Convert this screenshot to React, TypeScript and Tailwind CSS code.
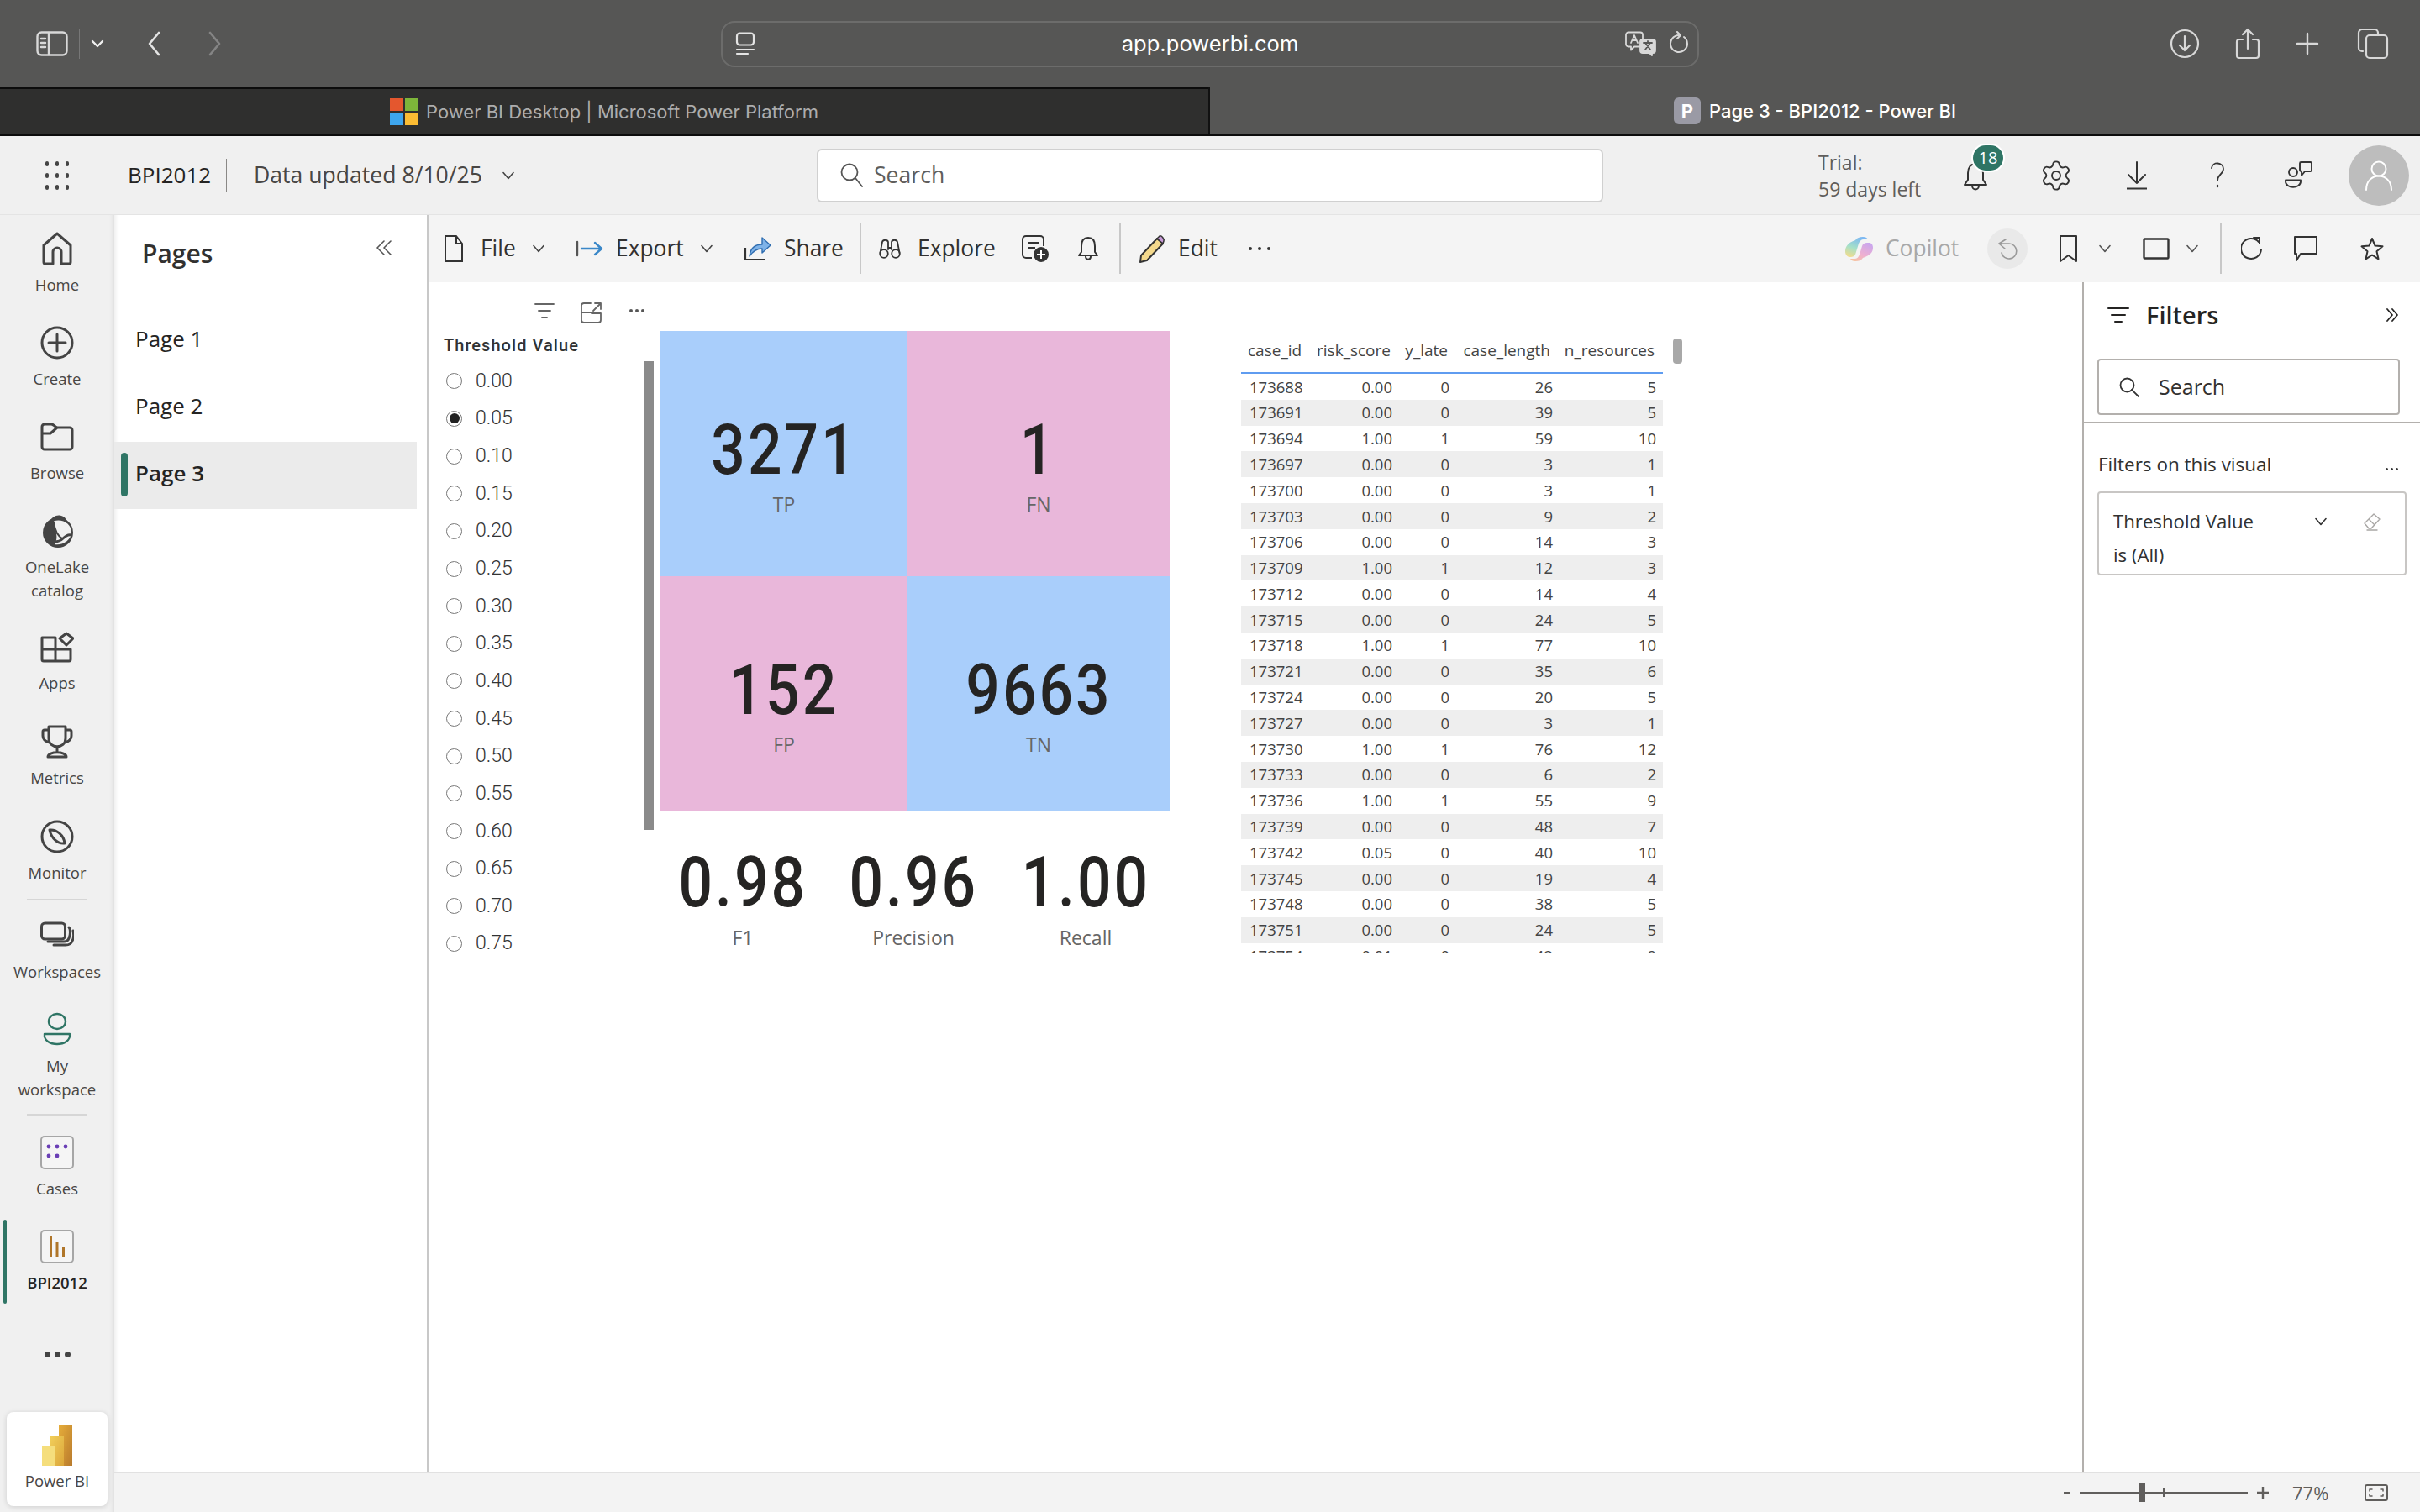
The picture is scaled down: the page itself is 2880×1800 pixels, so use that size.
import React from "react";
import { Settings } from "lucide-react";

const Ic = ({ w, h, c = "currentColor", sw = 2, children, className = "" }: { w: number; h: number; c?: string; sw?: number; children: React.ReactNode; className?: string }) => (
  <svg width={w} height={h} viewBox={`0 0 ${w} ${h}`} fill="none" stroke={c} strokeWidth={sw} strokeLinecap="round" strokeLinejoin="round" className={`shrink-0 ${className}`}>
    {children}
  </svg>
);

const Chevron = ({ c = "#444", className = "" }: { c?: string; className?: string }) => (
  <Ic w={14} h={10} c={c} sw={1.6} className={className}><path d="M1 1.5l6 7 6-7" /></Ic>
);

function SafariBar() {
  return (
    <div className="h-[104px] bg-[#565655] flex items-center text-[#e4e4e4] font-['Inter',sans-serif]">
      <div className="ml-[43px]">
        <Ic w={38} h={30} c="#d8d8d8" sw={2.4}>
          <rect x="1.5" y="1.5" width="35" height="27" rx="5" />
          <path d="M15 2v26M6 9h5M6 14h5M6 19h5" />
        </Ic>
      </div>
      <div className="ml-[13px] w-[1px] h-[36px] bg-[#777]" />
      <Ic w={16} h={10} c="#f0f0f0" sw={2.4} className="ml-[13px]"><path d="M2 2l6 6 6-6" /></Ic>
      <Ic w={16} h={30} c="#e4e4e4" sw={2.6} className="ml-[51px]"><path d="M14 2L3 15l11 13" /></Ic>
      <Ic w={16} h={30} c="#858585" sw={2.6} className="ml-[57px]"><path d="M2 2l11 13L2 28" /></Ic>
      <div className="ml-[594px] w-[1164px] h-[55px] rounded-[16px] border-2 border-[#6c6c6b] grid grid-cols-[1fr_auto_1fr] items-center">
        <div className="pl-[15px] flex">
          <Ic w={24} h={28} c="#e4e4e4" sw={2.2}>
            <rect x="2" y="1.5" width="20" height="14" rx="3.5" />
            <path d="M2 21h20M2 26h13" />
          </Ic>
        </div>
        <div className="text-[25.6px] leading-[32px] text-white">app.powerbi.com</div>
        <div className="flex justify-end items-center pr-[10px]">
          <Ic w={38} h={30} c="#d8d8d8" sw={1.8}>
            <path d="M4 1.5h14a3 3 0 013 3v11a3 3 0 01-3 3h-7l-4 4v-4H4a3 3 0 01-3-3v-11a3 3 0 013-3z" />
            <rect x="18" y="10" width="18" height="16" rx="3" fill="#d8d8d8" />
            <path d="M32 26v3l-3-3z" fill="#d8d8d8" />
            <path d="M7 14l4-9 4 9M8.5 11h5" />
            <path d="M22 14h10M27 12v2M24 22l6-8M30 22l-6-8" stroke="#565655" />
          </Ic>
          <Ic w={24} h={30} c="#d8d8d8" sw={2} className="ml-[14px]">
            <path d="M18 7a10 10 0 11-6-2" />
            <path d="M10 1l4 4-4 4" />
          </Ic>
        </div>
      </div>
      <Ic w={36} h={36} c="#d8d8d8" sw={2.2} className="ml-[560px]">
        <circle cx="18" cy="18" r="16" />
        <path d="M18 9v17M12 20l6 6 6-6" />
      </Ic>
      <Ic w={32} h={38} c="#d8d8d8" sw={2.2} className="ml-[41px]">
        <path d="M10 14H6a3 3 0 00-3 3v16a3 3 0 003 3h20a3 3 0 003-3V17a3 3 0 00-3-3h-4" />
        <path d="M16 25V2M10 8l6-6 6 6" />
      </Ic>
      <Ic w={28} h={28} c="#d8d8d8" sw={2.4} className="ml-[41px]"><path d="M14 2v24M2 14h24" /></Ic>
      <Ic w={38} h={38} c="#d8d8d8" sw={2.2} className="ml-[45px]">
        <rect x="11" y="9" width="25" height="27" rx="4" />
        <path d="M7 28H6a4 4 0 01-4-4V6a4 4 0 014-4h15a4 4 0 014 4v2" />
      </Ic>
    </div>
  );
}

function TabBar() {
  return (
    <div className="h-[58px] flex font-['Inter',sans-serif] text-[22px]">
      <div className="w-[1438px] bg-[#2f2f2e] border-y-2 border-[#0c0c0c] flex items-center justify-center text-[#adadad]">
        <div className="grid grid-cols-2 gap-[2px] w-[33px] h-[32px] mr-[10px]">
          <div className="bg-[#e4572e]" />
          <div className="bg-[#7db53a]" />
          <div className="bg-[#3ea6ee]" />
          <div className="bg-[#fbbc33]" />
        </div>
        <span>Power BI Desktop | Microsoft Power Platform</span>
      </div>
      <div className="w-[2px] bg-[#111] border-b-2 border-[#0c0c0c]" />
      <div className="flex-1 bg-[#565655] border-b-2 border-[#0c0c0c] flex items-center justify-center text-white">
        <div className="w-[32px] h-[32px] rounded-[6px] bg-[#9a9aa5] text-white font-bold text-[22px] flex items-center justify-center mr-[10px]">P</div>
        <span className="font-medium">Page 3 - BPI2012 - Power BI</span>
      </div>
    </div>
  );
}

function HeaderBar() {
  return (
    <div className="h-[94px] bg-[#f0f0f0] flex items-center shrink-0 border-b border-[#e4e4e4]">
      <div className="w-[972px] flex items-center shrink-0">
        <div className="ml-[54px] grid grid-cols-3 gap-x-[8px] gap-y-[8px]">
          {Array.from({ length: 9 }).map((_, i) => (
            <div key={i} className="w-[4px] h-[6px] rounded-full bg-[#444]" />
          ))}
        </div>
        <span className="ml-[70px] w-[100px] text-[26px] text-[#252423]">BPI2012</span>
        <div className="ml-[17px] w-[1px] h-[40px] bg-[#8a8886]" />
        <span className="ml-[32px] w-[274px] text-[26.6px] whitespace-nowrap text-[#484644]">Data updated 8/10/25</span>
        <Chevron c="#444" className="ml-[22px]" />
      </div>
      <div className="w-[936px] h-[64px] shrink-0 bg-white rounded-[6px] border-2 border-[#d0d0d0] flex items-center text-[26.6px] text-[#605e5c]">
        <Ic w={28} h={30} c="#555" sw={1.8} className="ml-[26px]">
          <circle cx="11" cy="11" r="9.5" />
          <path d="M18 18l8 10" />
        </Ic>
        <span className="ml-[12px]">Search</span>
      </div>
      <div className="ml-[256px] w-[139px] shrink-0 text-[23px] leading-[32px] text-[#605e5c]">
        <div>Trial:</div>
        <div>59 days left</div>
      </div>
      <div className="w-[96px] shrink-0 flex justify-center relative">
        <Ic w={30} h={40} c="#333" sw={2}>
          <path d="M15 6c-6 0-9 5-9 11v8l-4 6h26l-4-6v-8c0-6-3-11-9-11zM11 32c0 6 8 6 8 0" />
        </Ic>
        <div className="absolute left-[43px] -top-[18px] w-[40px] h-[34px] rounded-full bg-[#2f7565] border-2 border-white text-white text-[20px] flex items-center justify-center">18</div>
      </div>
      <div className="w-[96px] shrink-0 flex justify-center">
        <Settings size={40} color="#333" strokeWidth={1.15} />
      </div>
      <div className="w-[96px] shrink-0 flex justify-center">
        <Ic w={26} h={34} c="#333" sw={2}>
          <path d="M13 1v25M3 16l10 10 10-10" />
          <path d="M1 32.5h24" strokeLinecap="butt" />
        </Ic>
      </div>
      <div className="w-[96px] shrink-0 flex justify-center">
        <Ic w={20} h={32} c="#333" sw={1.8}>
          <path d="M3 7c1-8 14-7 14 1 0 6-7 7-7 14" />
          <path d="M10 28v1" strokeWidth="2.4" />
        </Ic>
      </div>
      <div className="w-[96px] shrink-0 flex justify-center">
        <Ic w={33} h={33} c="#333" sw={1.9}>
          <circle cx="10" cy="13" r="5" />
          <path d="M1 22.5h18v1.500c0 9-18 9-18 0z" />
          <path d="M19.500 1h11a1.500 1.500 0 011.500 1.500v8a1.500 1.500 0 01-1.500 1.500H24l-4 5v-5a2 2 0 01-2-2V2.500A1.500 1.500 0 0119.500 1z" />
        </Ic>
      </div>
      <div className="w-[96px] shrink-0 flex justify-center">
        <div className="w-[72px] h-[72px] rounded-full bg-[#bdbdbd] flex items-center justify-center">
          <Ic w={34} h={36} c="#fff" sw={2}>
            <circle cx="17" cy="10" r="8.5" />
            <path d="M2 35c0-22 30-22 30 0" />
          </Ic>
        </div>
      </div>
    </div>
  );
}

function NavItem({ label, icon, h, active, bold }: { label: React.ReactNode; icon: React.ReactNode; h: string; active?: boolean; bold?: boolean }) {
  return (
    <div className={`relative flex flex-col items-center pt-[20px] text-[18.5px] leading-[28px] text-center ${h} ${bold ? "text-[#252423] font-semibold" : "text-[#484644]"}`}>
      {active && <div className="absolute left-[4px] top-[8px] w-[4px] h-[100px] rounded-full bg-[#2f7565]" />}
      <div className="h-[40px] flex items-center justify-center">{icon}</div>
      <div className="mt-[9px]">{label}</div>
    </div>
  );
}

function LeftNav() {
  const c = "#444";
  return (
    <div className="w-[136px] bg-[#f0f0f0] shrink-0 flex flex-col shadow-[inset_-6px_0_6px_-6px_rgba(0,0,0,.12)]">
      <NavItem label="Home" h="h-[112px]" icon={
        <Ic w={36} h={40} c={c} sw={3}><path d="M18 2L2 16v20a2 2 0 002 2h9V24a5 5 0 0110 0v14h9a2 2 0 002-2V16z" /></Ic>
      } />
      <NavItem label="Create" h="h-[112px]" icon={
        <Ic w={40} h={40} c={c} sw={3}><circle cx="20" cy="20" r="18" /><path d="M20 10v20M10 20h20" /></Ic>
      } />
      <NavItem label="Browse" h="h-[112px]" icon={
        <Ic w={40} h={36} c={c} sw={3}><path d="M2 6a3 3 0 013-3h8c3 0 4 3 7 4h15a3 3 0 013 3v20a3 3 0 01-3 3H5a3 3 0 01-3-3zM2 14h10l8-7" /></Ic>
      } />
      <NavItem label={<>OneLake<br />catalog</>} h="h-[138px]" icon={
        <svg width="39" height="40" viewBox="0 0 39 40" className="shrink-0">
          <circle cx="20" cy="22" r="18" fill="#444" />
          <path d="M11 9C13 0 27-2 31 9z" fill="#444" />
          <path d="M15 8.500C25 5 36.500 12 36 22c-.5 9-10 15.500-20 14C21 29 17 19 15 8.500z" fill="#f0f0f0" />
          <path d="M8 32c8 2 14 1 18-3 4-4 7-5 10-4" fill="none" stroke="#444" strokeWidth="3" />
          <path d="M15 9c1 10 4 17 11 21" fill="none" stroke="#444" strokeWidth="2.200" />
        </svg>
      } />
      <NavItem label="Apps" h="h-[113px]" icon={
        <Ic w={40} h={38} c={c} sw={3}><path d="M2 8h16v28H4a2 2 0 01-2-2zM2 22h34v12a2 2 0 01-2 2H18M18 22V8M23 9l8-6 8 6-8 8z" /></Ic>
      } />
      <NavItem label="Metrics" h="h-[113px]" icon={
        <Ic w={38} h={40} c={c} sw={3}><path d="M9 2h20v14c0 13-20 13-20 0zM9 6H4a2 2 0 00-2 2v5c0 5 4 7 8 8M29 6h5a2 2 0 012 2v5c0 5-4 7-8 8M19 27v5M8 38c0-7 22-7 22 0z" /></Ic>
      } />
      <NavItem label="Monitor" h="h-[114px]" icon={
        <Ic w={40} h={40} c={c} sw={3}><circle cx="20" cy="20" r="18" /><path d="M11 12c8-1 17 6 18 16-8 1-16-6-18-16z" /></Ic>
      } />
      <div className="mx-[32px] h-[2px] bg-[#d6d6d6]" />
      <div className="h-[2px]" />
      <NavItem label="Workspaces" h="h-[112px]" icon={
        <Ic w={40} h={34} c={c} sw={3}><rect x="1.5" y="2" width="28" height="19" rx="4" /><path d="M34 7c2 2 2 9 0 13-1 3-3 4-6 4H9M39 11c1 5 1 9-1 12-1 4-4 5-8 5H16" /></Ic>
      } />
      <NavItem label={<>My<br />workspace</>} h="h-[140px]" icon={
        <Ic w={34} h={42} c="#2f7565" sw={2.4}><ellipse cx="17" cy="11" rx="10" ry="9" /><path d="M2 26h30c2 16-32 16-30 0z" /></Ic>
      } />
      <div className="mx-[32px] h-[2px] bg-[#d6d6d6]" />
      <div className="h-[4px]" />
      <NavItem label="Cases" h="h-[112px]" icon={
        <svg width="40" height="40" viewBox="0 0 40 40" className="shrink-0">
          <rect x="1" y="1" width="38" height="38" rx="4" fill="#f5f5f5" stroke="#a6a6a6" strokeWidth="2" />
          {[[10, 13], [20, 13], [30, 13], [10, 24], [20, 24]].map(([x, y]) => <circle key={`${x}-${y}`} cx={x} cy={y} r="2.4" fill="#6a3fb5" />)}
        </svg>
      } />
      <NavItem label="BPI2012" h="h-[112px]" bold active icon={
        <svg width="40" height="40" viewBox="0 0 40 40" className="shrink-0">
          <rect x="1" y="1" width="38" height="38" rx="4" fill="#f5f5f5" stroke="#a6a6a6" strokeWidth="2" />
          <rect x="11" y="8" width="3" height="24" fill="#b0762a" />
          <rect x="18.5" y="14" width="3" height="18" fill="#b0762a" />
          <rect x="26" y="21" width="3" height="11" fill="#b0762a" />
        </svg>
      } />
      <div className="h-[56px] mt-[28px] flex justify-center gap-[5px] items-center">
        <div className="w-[7px] h-[7px] rounded-full bg-[#444]" />
        <div className="w-[7px] h-[7px] rounded-full bg-[#444]" />
        <div className="w-[7px] h-[7px] rounded-full bg-[#444]" />
      </div>
      <div className="mt-[41px] mx-[8px] h-[112px] w-[120px] bg-white rounded-[8px] shadow-[0_1px_6px_rgba(0,0,0,.14)] flex flex-col items-center pt-[16px]">
        <svg width="36" height="48" viewBox="0 0 36 48">
          <defs>
            <linearGradient id="pb1" x1="0" x2="1" y1="0" y2="1"><stop offset="0" stopColor="#e6ad3a" /><stop offset="1" stopColor="#b87a2d" /></linearGradient>
            <linearGradient id="pb2" x1="0" x2="1" y1="0" y2="1"><stop offset="0" stopColor="#f2cf5a" /><stop offset="1" stopColor="#dba63a" /></linearGradient>
          </defs>
          <rect x="20" y="0" width="16" height="48" fill="url(#pb1)" />
          <rect x="10" y="12" width="16" height="36" fill="url(#pb2)" />
          <rect x="0" y="24" width="16" height="24" fill="#f5de7c" />
        </svg>
        <div className="mt-[4px] text-[18.5px] leading-[28px] text-[#484644]">Power BI</div>
      </div>
    </div>
  );
}

function PagesPanel() {
  return (
    <div className="w-[374px] shrink-0 bg-white border-r-2 border-[#c8c8c8] flex flex-col pr-[12px] shadow-[inset_6px_0_6px_-6px_rgba(0,0,0,.12)]">
      <div className="h-[110px] flex items-center justify-between pl-[33px] pr-[30px] pb-[20px]">
        <span className="text-[30px] font-semibold text-[#323130]">Pages</span>
        <Ic w={18} h={18} c="#555" sw={1.6} className="mb-[12px]"><path d="M9 1L1 9l8 8M17 1L9 9l8 8" /></Ic>
      </div>
      <div className="h-[80px] flex items-center pl-[25px] pb-[5px] text-[26px] text-[#252423]">Page 1</div>
      <div className="h-[80px] flex items-center pl-[25px] pb-[5px] text-[26px] text-[#252423]">Page 2</div>
      <div className="h-[80px] flex items-center bg-[#ebebeb] text-[26px] font-semibold text-[#252423]">
        <div className="ml-[8px] mb-[2px] w-[8px] h-[52px] rounded-full bg-[#2f7565]" />
        <span className="ml-[9px] mb-[5px]">Page 3</span>
      </div>
    </div>
  );
}

function Toolbar() {
  return (
    <div className="h-[80px] shrink-0 bg-[#f4f4f4] flex items-center text-[26.4px] text-[#323130]">
      <Ic w={22} h={32} c="#333" sw={2} className="ml-[19px]"><path d="M1 1h13l7 9v21H1zM14 1v9h7" /><path d="M1 31h20" strokeWidth="3" /></Ic>
      <span className="ml-[21px] w-[41px]">File</span>
      <Chevron className="ml-[21px]" />
      <Ic w={32} h={20} c="#3a87c8" sw={2.4} className="ml-[38px]"><path d="M1 2v16" stroke="#555" /><path d="M6 10h24M22 3l8 7-8 7" /></Ic>
      <span className="ml-[15px] w-[80px]">Export</span>
      <Chevron className="ml-[21px]" />
      <svg width="32" height="30" viewBox="0 0 32 30" className="ml-[38px] shrink-0">
        <path d="M1 14v14h24" fill="none" stroke="#333" strokeWidth="2.2" />
        <path d="M6 24C7 14 13 10 21 10V2l10 9-10 9v-5c-7 0-11 3-15 9z" fill="#7fb3e8" stroke="#2f6db0" strokeWidth="1.4" strokeLinejoin="round" />
      </svg>
      <span className="ml-[15px] w-[70px]">Share</span>
      <div className="ml-[20px] w-[2px] h-[60px] bg-[#c8c8c8]" />
      <Ic w={26} h={24} c="#333" sw={1.8} className="ml-[21px]">
        <circle cx="6" cy="18" r="4.8" /><circle cx="20" cy="18" r="4.8" />
        <path d="M1.500 17L4 4c1-3 6-3 7 0v9M24.500 17L22 4c-1-3-6-3-7 0v9M11 11h4" />
      </Ic>
      <span className="ml-[20px] w-[90px]">Explore</span>
      <svg width="32" height="32" viewBox="0 0 32 32" className="ml-[34px] shrink-0">
        <path d="M12 27H5a4 4 0 01-4-4V5a4 4 0 014-4h17a4 4 0 014 4v8M7 9h14M7 15h9" fill="none" stroke="#333" strokeWidth="2" />
        <circle cx="23" cy="23" r="9" fill="#333" />
        <path d="M23 18v10M18 23h10" stroke="#fff" strokeWidth="2" />
      </svg>
      <Ic w={24} h={30} c="#333" sw={2} className="ml-[35px]"><path d="M12 2c-6 0-8 5-8 10v7l-3 4h22l-3-4v-7c0-5-2-10-8-10zM9 24c0 5 6 5 6 0" /></Ic>
      <div className="ml-[25px] w-[2px] h-[60px] bg-[#c8c8c8]" />
      <svg width="32" height="34" viewBox="0 0 32 34" className="ml-[21px] shrink-0">
        <path d="M22 5l7 6L10 31l-8 2 1-8z" fill="#f4d98c" stroke="#333" strokeWidth="2" strokeLinejoin="round" />
        <path d="M22 5l3-3c2-1 6 3 5 6l-1 3z" fill="#c79ad8" stroke="#333" strokeWidth="1.5" />
      </svg>
      <span className="ml-[15px] w-[63px]">Edit</span>
      <div className="ml-[21px] flex gap-[7px]">
        <div className="w-[4px] h-[4px] rounded-full bg-[#333]" />
        <div className="w-[4px] h-[4px] rounded-full bg-[#333]" />
        <div className="w-[4px] h-[4px] rounded-full bg-[#333]" />
      </div>
      <div className="flex-1" />
      <svg width="33" height="29" viewBox="0 0 33 29" className="shrink-0">
        <defs>
          <linearGradient id="cp1" x1="0.6" x2="0.2" y1="0" y2="1"><stop offset="0" stopColor="#7cb8f2" /><stop offset=".55" stopColor="#a5e0c8" /><stop offset="1" stopColor="#f2dc8c" /></linearGradient>
          <linearGradient id="cp2" x1="0.8" x2="0.2" y1="0" y2="1"><stop offset="0" stopColor="#c9a6ee" /><stop offset=".6" stopColor="#efb0d0" /><stop offset="1" stopColor="#f6c2a0" /></linearGradient>
        </defs>
        <path d="M12 4c2-3 5-4 9-4 3 0 5 1 6 3h-5c-3 0-5 2-6 5l-4 13c-1 2-3 3-6 3-4 0-6-3-6-7 0-5 3-10 12-13z" fill="url(#cp1)" />
        <path d="M21 25c-2 3-5 4-9 4-3 0-5-1-6-3h5c3 0 5-2 6-5l3-10c1-3 3-4 6-4h2c3 0 5 2 5 6 0 5-3 9-12 12z" fill="url(#cp2)" />
      </svg>
      <span className="ml-[15px] w-[90px] text-[#a8a8a8]">Copilot</span>
      <div className="ml-[31px] w-[48px] h-[48px] rounded-full bg-[#e9e9e9] flex items-center justify-center">
        <Ic w={24} h={26} c="#999" sw={1.6}><path d="M2 7l8-5M2 7l7 6M2 7h12a9 9 0 11-9 11" /></Ic>
      </div>
      <Ic w={21} h={32} c="#333" sw={2} className="ml-[38px]"><path d="M1 1h19v30l-9.5-7L1 31z" /></Ic>
      <Chevron c="#555" className="ml-[26px]" />
      <Ic w={32} h={26} c="#333" sw={2.4} className="ml-[38px]"><rect x="1.5" y="1.5" width="29" height="23" rx="1" /></Ic>
      <Chevron c="#555" className="ml-[20px]" />
      <div className="ml-[26px] w-[2px] h-[60px] bg-[#c8c8c8]" />
      <Ic w={25} h={30} c="#333" sw={2} className="ml-[23px]"><path d="M21 7a12 12 0 10 3 9" /><path d="M15 2h7v7" /></Ic>
      <Ic w={28} h={30} c="#333" sw={2} className="ml-[38px]"><path d="M1 1h26v20H8l-5 8v-8H1z" /></Ic>
      <Ic w={28} h={28} c="#333" sw={2} className="ml-[51px]"><path d="M14 2l3.5 8.5 9 .8-7 6 2 9L14 21.5 6.5 26.3l2-9-7-6 9-.8z" /></Ic>
      <div className="w-[43px]" />
    </div>
  );
}

const thresholds = ["0.00","0.05","0.10","0.15","0.20","0.25","0.30","0.35","0.40","0.45","0.50","0.55","0.60","0.65","0.70","0.75"];

function Slicer() {
  return (
    <div className="w-[276px] shrink-0 h-[799px] flex overflow-hidden">
      <div className="w-[256px] shrink-0">
        <div className="h-[48px] pt-[20px] flex items-center pl-[126px]">
          <Ic w={24} h={20} c="#666" sw={1.8}><path d="M1 2h22M5 10h14M9 18h6" /></Ic>
          <Ic w={26} h={26} c="#666" sw={1.8} className="ml-[31px] mt-[4px]">
            <path d="M12 2H4a3 3 0 00-3 3v17a3 3 0 003 3h17a3 3 0 003-3v-8H13V13H1M15 11l9-9M17 2h7v7" />
          </Ic>
          <div className="ml-[32px] flex gap-[3px]">
            <div className="w-[4px] h-[4px] rounded-full bg-[#555]" />
            <div className="w-[4px] h-[4px] rounded-full bg-[#555]" />
            <div className="w-[4px] h-[4px] rounded-full bg-[#555]" />
          </div>
        </div>
        <div className="pl-[18px] mt-[14px] h-[26px] leading-[26px] text-[20px] font-medium tracking-[1.05px] text-[#333] font-['Roboto',sans-serif]">Threshold Value</div>
        <div className="mt-[7.5px]">
          {thresholds.map((t) => (
            <div key={t} className="h-[44.65px] flex items-center pl-[21px]">
              <div className="w-[19px] h-[19px] rounded-full border border-[#777] bg-white flex items-center justify-center shrink-0">
                {t === "0.05" && <div className="w-[12px] h-[12px] rounded-full bg-[#222]" />}
              </div>
              <span className="ml-[16px] text-[23px] text-[#333] font-['Roboto',sans-serif] font-light leading-[28px]">{t}</span>
            </div>
          ))}
        </div>
      </div>
      <div className="w-[12px] h-[558px] mt-[94px] bg-[#8a8a8a] shrink-0" />
    </div>
  );
}

const Big = ({ children }: { children: React.ReactNode }) => (
  <div className="h-[84px] leading-[84px] text-[84px] font-medium text-[#252423] font-['Roboto',sans-serif] tracking-[3.5px] scale-x-[.85]">{children}</div>
);
const Sub = ({ children, className = "mt-[9px]" }: { children: React.ReactNode; className?: string }) => (
  <div className={`h-[30px] leading-[30px] text-[23px] text-[#666] ${className}`}>{children}</div>
);

function Matrix() {
  return (
    <div className="w-[606px] shrink-0 mt-[58px]">
      <div className="grid grid-cols-[294px_312px] grid-rows-[292px_280px]">
        <div className="bg-[#a9cefb] flex flex-col items-center pt-[100px]"><Big>3271</Big><Sub className="mt-[7px]">TP</Sub></div>
        <div className="bg-[#e9b7da] flex flex-col items-center pt-[100px]"><Big>1</Big><Sub className="mt-[7px]">FN</Sub></div>
        <div className="bg-[#e9b7da] flex flex-col items-center pt-[94px]"><Big>152</Big><Sub className="mt-[7px]">FP</Sub></div>
        <div className="bg-[#a9cefb] flex flex-col items-center pt-[94px]"><Big>9663</Big><Sub className="mt-[7px]">TN</Sub></div>
      </div>
      <div className="mt-[43px] grid grid-cols-[196px_210px_200px]">
        <div className="flex flex-col items-center"><Big>0.98</Big><Sub className="mt-[8px]">F1</Sub></div>
        <div className="flex flex-col items-center"><Big>0.96</Big><Sub className="mt-[8px]">Precision</Sub></div>
        <div className="flex flex-col items-center"><Big>1.00</Big><Sub className="mt-[8px]">Recall</Sub></div>
      </div>
    </div>
  );
}

const rows: [string, string, string, string, string][] = [
  ["173688","0.00","0","26","5"],["173691","0.00","0","39","5"],["173694","1.00","1","59","10"],["173697","0.00","0","3","1"],
  ["173700","0.00","0","3","1"],["173703","0.00","0","9","2"],["173706","0.00","0","14","3"],["173709","1.00","1","12","3"],
  ["173712","0.00","0","14","4"],["173715","0.00","0","24","5"],["173718","1.00","1","77","10"],["173721","0.00","0","35","6"],
  ["173724","0.00","0","20","5"],["173727","0.00","0","3","1"],["173730","1.00","1","76","12"],["173733","0.00","0","6","2"],
  ["173736","1.00","1","55","9"],["173739","0.00","0","48","7"],["173742","0.05","0","40","10"],["173745","0.00","0","19","4"],
  ["173748","0.00","0","38","5"],["173751","0.00","0","24","5"],["173754","0.01","0","42","9"],
];

function DataTable() {
  return (
    <div className="ml-[85px] mt-[58px] flex items-start shrink-0">
      <div className="w-[502px]">
        <div className="h-[51px] flex items-center pb-[2px] border-b-2 border-[#5f9cf0] text-[19px] text-[#444]">
          <div className="w-[84px] pl-[8px]">case_id</div>
          <div className="w-[100px] text-right pr-[6px]">risk_score</div>
          <div className="w-[68px] text-right pr-[6px]">y_late</div>
          <div className="w-[123px] text-right pr-[7px]">case_length</div>
          <div className="w-[127px] text-right pr-[10px] whitespace-nowrap">n_resources</div>
        </div>
        <div className="h-[690px] overflow-hidden text-[18.5px] text-[#444]">
          {rows.map((r, i) => (
            <div key={r[0]} className={`h-[30.8px] flex items-center ${i % 2 === 1 ? "bg-[#eeeeee]" : "bg-white"}`}>
              <div className="w-[84px] pl-[10px]">{r[0]}</div>
              <div className="w-[100px] text-right pr-[4px]">{r[1]}</div>
              <div className="w-[68px] text-right pr-[4px]">{r[2]}</div>
              <div className="w-[123px] text-right pr-[4px]">{r[3]}</div>
              <div className="w-[127px] text-right pr-[8px]">{r[4]}</div>
            </div>
          ))}
        </div>
      </div>
      <div className="ml-[12px] mt-[9px] w-[11px] h-[30px] rounded-[4px] bg-[#a8a8a8]" />
    </div>
  );
}

function Filters() {
  return (
    <div className="w-[402px] shrink-0 border-l-2 border-[#b3b0ad] bg-white text-[#252423]">
      <div className="h-[78px] flex items-center pl-[28px] pr-[26px]">
        <Ic w={26} h={20} c="#252423" sw={2}><path d="M1 2h24M5 10h16M9 18h8" /></Ic>
        <span className="ml-[20px] text-[29px] font-semibold">Filters</span>
        <div className="flex-1" />
        <Ic w={14} h={16} c="#252423" sw={1.8}><path d="M1 1l6 7-6 7M7 1l6 7-6 7" /></Ic>
      </div>
      <div className="mt-[13px] ml-[16px] w-[360px] h-[67px] border-2 border-[#b3b0ad] rounded-[4px] flex items-center text-[25px] text-[#323130]">
        <Ic w={24} h={24} c="#333" sw={1.8} className="ml-[24px]"><circle cx="9.5" cy="9.5" r="8" /><path d="M15 15l8 8" /></Ic>
        <span className="ml-[23px]">Search</span>
      </div>
      <div className="mt-[8px] h-[2px] bg-[#b3b0ad]" />
      <div className="mt-[32px] pl-[17px] pr-[26px] h-[34px] flex items-center justify-between text-[22.5px] text-[#323130]">
        <span>Filters on this visual</span>
        <div className="flex gap-[3px] mt-[10px]">
          <div className="w-[3px] h-[3px] rounded-full bg-[#333]" />
          <div className="w-[3px] h-[3px] rounded-full bg-[#333]" />
          <div className="w-[3px] h-[3px] rounded-full bg-[#333]" />
        </div>
      </div>
      <div className="mt-[15px] ml-[16px] w-[368px] h-[100px] border-2 border-[#c8c6c4] rounded-[4px] pl-[17px] pt-[14px] text-[22.2px] leading-[40px] text-[#323130]">
        <div className="flex items-center">
          <span className="w-[240px]">Threshold Value</span>
          <Chevron c="#333" />
          <Ic w={22} h={22} c="#a8a6a4" sw={1.4} className="ml-[43px]"><path d="M2 13L13 2l7 6-10 11H7zM7 8l7 7M5 21h12" /></Ic>
        </div>
        <div>is (All)</div>
      </div>
    </div>
  );
}

function StatusBar() {
  return (
    <div className="h-[48px] shrink-0 bg-[#f3f3f3] border-t-2 border-[#e1e1e1] flex items-center text-[#605e5c]">
      <div className="flex-1" />
      <div className="w-[8px] h-[3px] bg-[#605e5c]" />
      <div className="ml-[11px] w-[200px] h-[2px] bg-[#605e5c] relative">
        <div className="absolute left-[70px] -top-[10px] w-[8px] h-[22px] bg-[#605e5c]" />
        <div className="absolute left-[99px] -top-[5px] w-[2px] h-[11px] bg-[#605e5c]" />
      </div>
      <Ic w={14} h={14} c="#605e5c" sw={2.4} className="ml-[11px]"><path d="M7 0v14M0 7h14" /></Ic>
      <span className="ml-[28px] w-[44px] text-[22px]">77%</span>
      <div className="ml-[42px] mr-[38px] w-[28px] h-[20px] rounded-[3px] border-2 border-[#605e5c] flex items-center justify-center">
        <Ic w={18} h={10} c="#605e5c" sw={1.5}><path d="M1 3V1h3M14 1h3v2M1 7v2h3M14 9h3V7" /></Ic>
      </div>
    </div>
  );
}

export default function App() {
  return (
    <div className="w-[2880px] h-[1800px] flex flex-col overflow-hidden bg-white font-['Open_Sans','Noto_Sans',sans-serif]">
      <SafariBar />
      <TabBar />
      <HeaderBar />
      <div className="flex-1 flex min-h-0">
        <LeftNav />
        <div className="flex-1 flex flex-col min-w-0">
          <div className="flex-1 flex min-h-0">
            <PagesPanel />
            <div className="flex-1 flex flex-col min-w-0">
              <Toolbar />
              <div className="flex-1 flex min-h-0">
                <div className="flex-1 flex items-start min-w-0">
                  <Slicer />
                  <Matrix />
                  <DataTable />
                </div>
                <Filters />
              </div>
            </div>
          </div>
          <StatusBar />
        </div>
      </div>
    </div>
  );
}
